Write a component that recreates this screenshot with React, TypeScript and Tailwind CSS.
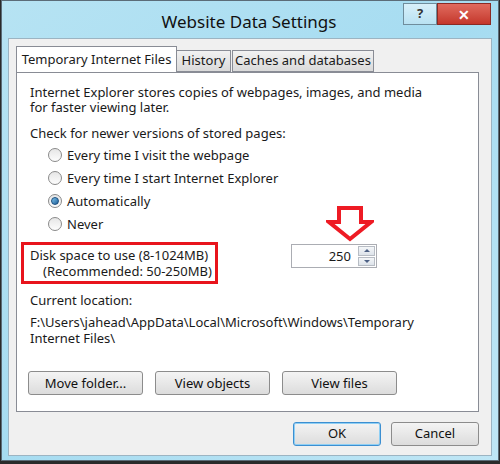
import React from "react";

const font = { fontFamily: '"Noto Sans", "Open Sans", Arial, sans-serif' };

function Radio({ checked, label }: { checked?: boolean; label: string }) {
  return (
    <div className="flex items-center gap-[5px] h-[23px]">
      <span className="w-[14px] h-[14px] rounded-full border border-[#8a8a8a] bg-gradient-to-b from-[#e6e6e6] to-[#fdfdfd] flex items-center justify-center">
        {checked && (
          <span className="w-[8px] h-[8px] rounded-full bg-gradient-to-br from-[#7fc4ec] to-[#1c5f99] border border-[#1b4f80]" />
        )}
      </span>
      <span>{label}</span>
    </div>
  );
}

function Btn({ label, focused, w }: { label: string; focused?: boolean; w: string }) {
  return (
    <button
      className={`${w} h-[24px] rounded-[3px] border ${
        focused ? "border-[#3c8fd1] shadow-[inset_0_0_0_1px_#8fcff4]" : "border-[#8c8c8c]"
      } bg-gradient-to-b from-[#f4f4f4] to-[#dcdcdc] text-[13px] text-[#111] flex items-center justify-center`}
    >
      {label}
    </button>
  );
}

export default function App() {
  return (
    <div className="w-[500px] h-[464px] bg-[#2a2a2a] overflow-hidden text-[#1a1a1a]" style={font}>
      <div className="w-[498px] h-[461px] ml-[1px] border border-[#5b6c78] bg-gradient-to-br from-[#b6e3f3] via-[#a6dcf1] to-[#bfe6f5] flex flex-col">
        {/* title bar */}
        <div className="h-[37px] relative flex items-center justify-center">
          <span className="text-[17px] text-[#111] mt-[4px] ml-[-2px]">Website Data Settings</span>
          <div className="absolute top-[2px] right-[7px] flex">
            <div className="w-[34px] h-[22px] border border-[#6f8d9c] bg-gradient-to-b from-[#d8f0fa] to-[#b9e2f2] flex items-center justify-center text-[13px] text-[#333] font-bold">
              ?
            </div>
            <div className="w-[54px] h-[22px] border border-[#8a2a24] bg-gradient-to-b from-[#e06a5e] to-[#c4362b] flex items-center justify-center text-white font-bold text-[14px]">
              ✕
            </div>
          </div>
        </div>

        {/* client area */}
        <div className="mx-[6px] h-[418px] bg-[#f0f0f0] border border-[#9cb4c2] flex flex-col pl-[7px] pr-[12px] pt-[8px] text-[13px]">
          {/* tabs */}
          <div className="flex items-end h-[25px] relative z-10 shrink-0">
            <div className="w-[161px] h-[26px] bg-white border border-[#898c95] border-b-0 flex items-center justify-center">
              Temporary Internet Files
            </div>
            <div className="w-[54px] h-[22px] bg-gradient-to-b from-[#f2f2f2] to-[#dadada] border border-[#898c95] border-l-0 flex items-center justify-center">
              History
            </div>
            <div className="w-[142px] h-[22px] ml-[1px] bg-gradient-to-b from-[#f2f2f2] to-[#dadada] border border-[#898c95] flex items-center justify-center">
              Caches and databases
            </div>
          </div>

          {/* panel */}
          <div className="h-[340px] shrink-0 bg-white border border-[#898c95] flex flex-col pl-[13px] pt-[11px] leading-[16px]">
            <p>Internet Explorer stores copies of webpages, images, and media</p>
            <p className="mt-[-1px]">for faster viewing later.</p>
            <p className="mt-[10px]">Check for newer versions of stored pages:</p>
            <div className="flex flex-col ml-[18px] mt-[2px]">
              <Radio label="Every time I visit the webpage" />
              <Radio label="Every time I start Internet Explorer" />
              <Radio checked label="Automatically" />
              <Radio label="Never" />
            </div>

            <div className="flex items-start mt-[7px]">
              <div className="w-[197px] h-[42px] ml-[-9px] border-[3px] border-[#e8141c] flex flex-col justify-center pl-[6px] leading-[16px]">
                <span>Disk space to use (8-1024MB)</span>
                <span className="pl-[13px]">(Recommended: 50-250MB)</span>
              </div>
              <div className="relative ml-[73px] mt-[2px] w-[86px] h-[24px] border border-[#abadb3] flex">
                <svg className="absolute left-[34px] top-[-39px]" width="48" height="36" viewBox="0 0 48 36">
                  <path
                    d="M13 2 H35 V16 H45 L24 33 L3 16 H13 Z"
                    fill="white"
                    stroke="#ee1b24"
                    strokeWidth="4"
                    strokeLinejoin="miter"
                  />
                </svg>
                <span className="flex-1 flex items-center justify-end pr-[6px]">250</span>
                <div className="w-[19px] flex flex-col gap-[1px] p-[1px]">
                  <div className="flex-1 border border-[#b7bcc4] bg-gradient-to-b from-[#f4f6f8] to-[#dde3ea] flex items-center justify-center">
                    <span className="w-0 h-0 border-l-[3px] border-r-[3px] border-b-[3px] border-l-transparent border-r-transparent border-b-[#4d6185]" />
                  </div>
                  <div className="flex-1 border border-[#b7bcc4] bg-gradient-to-b from-[#f4f6f8] to-[#dde3ea] flex items-center justify-center">
                    <span className="w-0 h-0 border-l-[3px] border-r-[3px] border-t-[3px] border-l-transparent border-r-transparent border-t-[#4d6185]" />
                  </div>
                </div>
              </div>
            </div>

            <p className="mt-[8px]">Current location:</p>
            <p className="mt-[6px]">F:\Users\jahead\AppData\Local\Microsoft\Windows\Temporary</p>
            <p>Internet Files\</p>

            <div className="flex gap-[12px] mt-[25px] ml-[-2px]">
              <Btn w="w-[115px]" label="Move folder..." />
              <Btn w="w-[115px]" label="View objects" />
              <Btn w="w-[115px]" label="View files" />
            </div>
          </div>

          {/* footer buttons */}
          <div className="flex justify-end gap-[10px] mt-[10px]">
            <Btn w="w-[88px]" focused label="OK" />
            <Btn w="w-[88px]" label="Cancel" />
          </div>
        </div>
      </div>
    </div>
  );
}
